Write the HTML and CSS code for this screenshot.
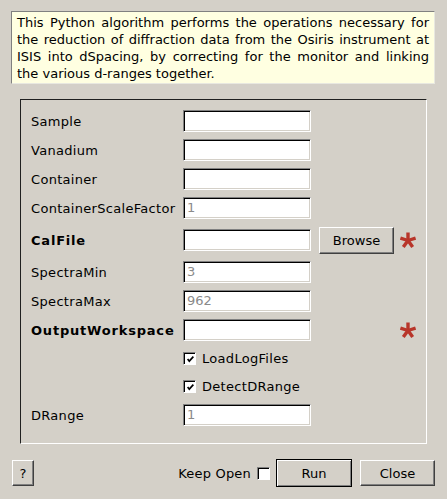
FILE: index.html
```html
<!DOCTYPE html>
<html>
<head>
<meta charset="utf-8">
<link rel="stylesheet" href="styles.css">
</head>
<body>
<div class="desc">This Python algorithm performs the operations necessary for the reduction of diffraction data from the Osiris instrument at ISIS into dSpacing, by correcting for the monitor and linking the various d-ranges together.</div>

<div class="group">
  <div class="grid">
    <div class="lbl">Sample</div><div class="field"></div><div></div><div></div>
    <div class="lbl">Vanadium</div><div class="field"></div><div></div><div></div>
    <div class="lbl">Container</div><div class="field"></div><div></div><div></div>
    <div class="lbl">ContainerScaleFactor</div><div class="field">1</div><div></div><div></div>
    <div class="lbl bold">CalFile</div><div class="field"></div><div class="btncell"><div class="btn browse">Browse</div></div><div class="starcell"><svg class="star" viewBox="0 0 16 16"><g stroke="#b8352a" stroke-width="3.4" stroke-linecap="butt"><line x1="8" y1="8.5" x2="8" y2="0.5"/><line x1="8" y1="8.5" x2="15.6" y2="6"/><line x1="8" y1="8.5" x2="0.4" y2="6"/><line x1="8" y1="8.5" x2="12.7" y2="15"/><line x1="8" y1="8.5" x2="3.3" y2="15"/></g></svg></div>
    <div class="lbl">SpectraMin</div><div class="field">3</div><div></div><div></div>
    <div class="lbl">SpectraMax</div><div class="field">962</div><div></div><div></div>
    <div class="lbl bold">OutputWorkspace</div><div class="field"></div><div></div><div class="starcell"><svg class="star" viewBox="0 0 16 16"><g stroke="#b8352a" stroke-width="3.4" stroke-linecap="butt"><line x1="8" y1="8.5" x2="8" y2="0.5"/><line x1="8" y1="8.5" x2="15.6" y2="6"/><line x1="8" y1="8.5" x2="0.4" y2="6"/><line x1="8" y1="8.5" x2="12.7" y2="15"/><line x1="8" y1="8.5" x2="3.3" y2="15"/></g></svg></div>
    <div class="lbl"></div><div class="chkrow"><span class="chk"><svg viewBox="0 0 11 11"><path d="M2 5 L4 7.5 L9 2" fill="none" stroke="#000" stroke-width="2"/></svg></span><span>LoadLogFiles</span></div><div></div>
    <div class="lbl"></div><div class="chkrow"><span class="chk"><svg viewBox="0 0 11 11"><path d="M2 5 L4 7.5 L9 2" fill="none" stroke="#000" stroke-width="2"/></svg></span><span>DetectDRange</span></div><div></div>
    <div class="lbl">DRange</div><div class="field">1</div><div></div><div></div>
  </div>
</div>

<div class="bottom">
  <div class="btn help">?</div>
  <div class="spacer"></div>
  <span class="keep">Keep Open</span>
  <span class="chk empty"></span>
  <div class="btn run">Run</div>
  <div class="btn close">Close</div>
</div>
</body>
</html>
```

FILE: styles.css
```css
html, body {
  margin: 0;
  padding: 0;
}
body {
  background: #d4d0c8;
  font-family: "DejaVu Sans", sans-serif;
  font-size: 13px;
  color: #000;
  width: 447px;
  height: 499px;
  overflow: hidden;
}
.desc {
  margin: 11px 12px 0 11px;
  background: #ffffe1;
  border-top: 1px solid #808080;
  border-left: 1px solid #808080;
  border-right: 1px solid #e8e8e0;
  border-bottom: 1px solid #e8e8e0;
  padding: 2px 5px 0 5px;
  line-height: 17px;
  text-align: justify;
  box-sizing: border-box;
  height: 73px;
}
.group {
  margin: 15px 20px 0 20px;
  height: 345px;
  box-sizing: border-box;
  border-top: 1px solid #202020;
  border-left: 1px solid #202020;
  border-right: 1px solid #ffffff;
  border-bottom: 1px solid #ffffff;
  padding: 10px 0 0 10px;
}
.grid {
  display: grid;
  grid-template-columns: 152px 128px 83px 23px;
  grid-template-rows: 22px 22px 22px 22px 28px 22px 22px 22px 21px 21px 22px;
  row-gap: 7px;
  align-items: center;
}
.lbl {
  white-space: nowrap;
  letter-spacing: 0.3px;
}
.bold {
  font-weight: bold;
  letter-spacing: 0.8px;
}
.field {
  height: 22px;
  box-sizing: border-box;
  background: #fff;
  border-top: 1px solid #808080;
  border-left: 1px solid #808080;
  border-right: 1px solid #fff;
  border-bottom: 1px solid #fff;
  box-shadow: inset 1px 1px 0 #000, inset -1px -1px 0 #d4d0c8;
  color: #8a8a8a;
  padding-left: 3px;
  line-height: 20px;
}
.btn {
  box-sizing: border-box;
  border-top: 1px solid #fff;
  border-left: 1px solid #fff;
  border-right: 1px solid #404040;
  border-bottom: 1px solid #404040;
  box-shadow: inset -1px -1px 0 #808080;
  text-align: center;
  display: flex;
  align-items: center;
  justify-content: center;
}
.btncell {
  padding-left: 8px;
}
.browse {
  width: 75px;
  height: 27px;
}
.starcell {
  display: flex;
  align-items: center;
  padding-left: 6px;
}
.star {
  width: 16px;
  height: 16px;
  display: block;
}
.chkrow {
  grid-column: 2 / 4;
  display: flex;
  align-items: center;
  gap: 6px;
  letter-spacing: 0.3px;
}
.chk {
  width: 13px;
  height: 13px;
  box-sizing: border-box;
  background: #fff;
  border-top: 1px solid #808080;
  border-left: 1px solid #808080;
  border-right: 1px solid #fff;
  border-bottom: 1px solid #fff;
  box-shadow: inset 1px 1px 0 #000;
  display: inline-flex;
  align-items: center;
  justify-content: center;
}
.chk svg {
  width: 9px;
  height: 9px;
  display: block;
  margin: 1px 0 0 1px;
}
.bottom {
  display: flex;
  align-items: center;
  margin-top: 15px;
  padding: 0 12px;
  height: 28px;
}
.help {
  width: 22px;
  height: 26px;
}
.spacer {
  flex: 1;
}
.keep {
  letter-spacing: 0.2px;
}
.chk.empty {
  margin-left: 6px;
  margin-right: 6px;
}
.run {
  width: 76px;
  height: 28px;
  border: 1px solid #000;
  box-shadow: inset 1px 1px 0 #fff, inset -1px -1px 0 #808080;
}
.close {
  width: 75px;
  height: 26px;
  margin-left: 8px;
}
```
